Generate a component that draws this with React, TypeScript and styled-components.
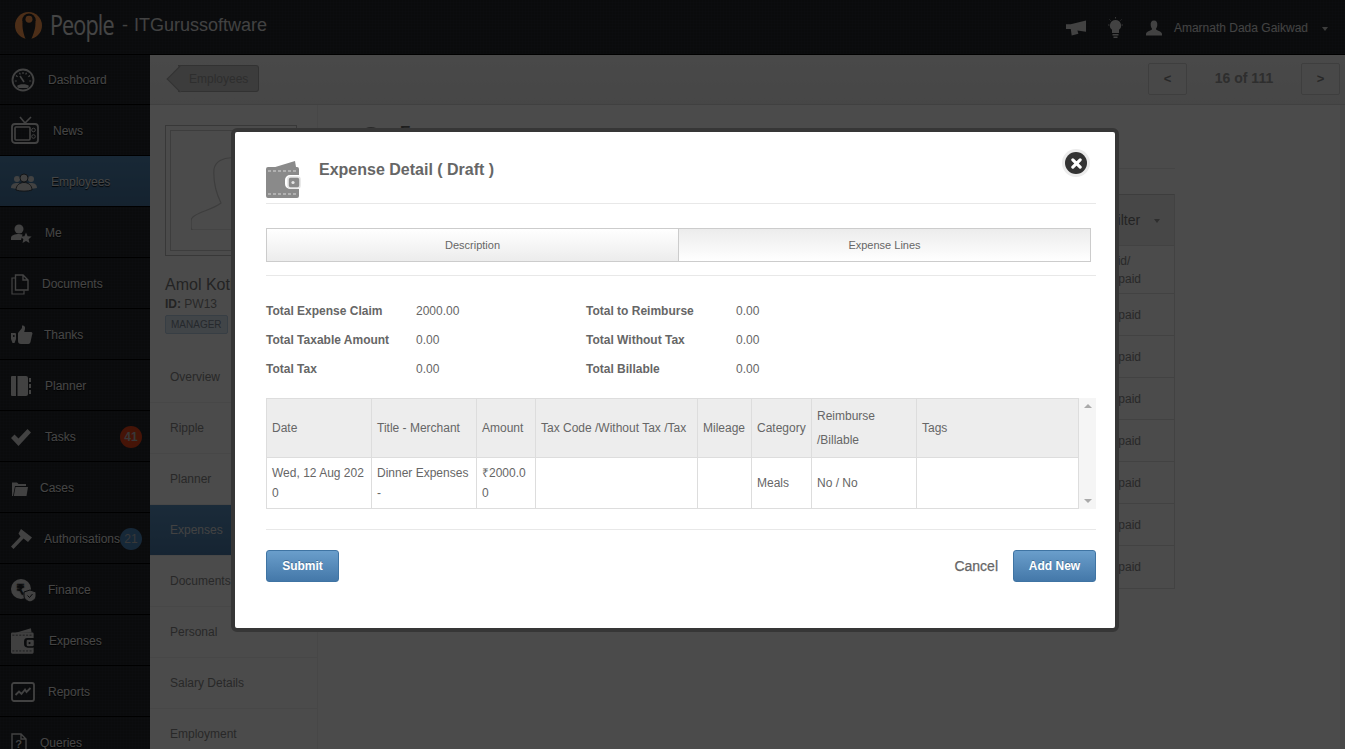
import React from "react";
import styled, { createGlobalStyle } from "styled-components";

const Global = createGlobalStyle`
  html, body { margin: 0; padding: 0; height: 100%; overflow: hidden; background: #fff; }
  body { font-family: "Liberation Sans", Arial, sans-serif; font-size: 12px; color: #666; }
  * { box-sizing: border-box; }
`;

const texture = `
  repeating-linear-gradient(0deg, rgba(255,255,255,.02) 0 1px, transparent 1px 3px),
  repeating-linear-gradient(90deg, rgba(255,255,255,.02) 0 1px, transparent 1px 3px)
`;

const Page = styled.div`
  width: 1345px; height: 749px; overflow: hidden;
  display: flex; flex-direction: column;
`;
const Header = styled.header`
  height: 55px; flex: none; display: flex; align-items: center;
  background: ${texture}, #22262b; border-bottom: 1px solid #000;
  color: #ddd; padding: 0 15px 4px 15px;
`;
const LogoMark = styled.svg`width: 27px; height: 27px; flex: none;`;
const Brand = styled.span`
  font-family: "Open Sans", sans-serif; font-size: 27px; color: #e6e6e6;
  margin-left: 8px; letter-spacing: -1.1px; line-height: 30px;
  display: inline-block; transform: scaleX(.8); transform-origin: left center; width: 64px;
`;
const Company = styled.span`
  font-size: 18px; color: #dcdcdc; margin-left: 8px; white-space: nowrap; word-spacing: 1px;
`;
const HeaderRight = styled.div`
  margin-left: auto; display: flex; align-items: center; color: #e0e0e0; font-size: 12px; padding-top: 5px;
`;
const HeadIcon = styled.svg<{ $gap: number }>`flex: none; margin-right: ${p => p.$gap}px;`;
const Caret = styled.span`
  width: 0; height: 0; border: 3.5px solid transparent; border-top: 4px solid ${p => p.color || "#ccc"};
  display: inline-block; margin-left: 14px; margin-top: 5px; margin-right: 2px;
`;

const Body = styled.div`flex: 1; display: flex; min-height: 0;`;
const Sidebar = styled.nav`
  width: 150px; flex: none; background: ${texture}, #22262b;
`;
const NavRow = styled.div<{ $active?: boolean }>`
  height: 51px; padding-top: 2px; display: flex; align-items: center; position: relative;
  border-bottom: 1px solid #000; color: #e8e8e8; font-size: 12px;
  text-shadow: 0 1px 1px #000;
  background: ${p => p.$active ? "linear-gradient(#5187b5, #46749e)" : "transparent"};
  &:first-child { height: 50px; padding-top: 0; }
`;
const NavSlot = styled.div<{ $w: number }>`
  width: ${p => p.$w}px; flex: none; display: flex; align-items: center; padding-left: 11px; height: 100%;
`;
const NavSvg = styled.svg`fill: #dcdcdc; color: #dcdcdc; flex: none; overflow: visible;`;
const Badge = styled.span<{ $c: string }>`
  position: absolute; left: 120px; top: 15px; width: 22px; height: 22px; border-radius: 50%;
  background: ${p => p.$c}; color: #bbb; font-size: 12px; font-weight: ${p => p.$c === "#e8431a" ? 700 : 400};
  display: flex; align-items: center; justify-content: center; text-shadow: none;
`;

const Main = styled.main`flex: 1; min-width: 0; display: flex; flex-direction: column; background: #fafafa;`;
const Toolbar = styled.div`
  height: 50px; flex: none; display: flex; align-items: center; padding: 0 5px 0 28px;
  background: linear-gradient(#f4f4f4, #ececec); border-bottom: 1px solid #d6d6d6;
`;
const BackWrap = styled.div`
  height: 27px; width: 81px; position: relative; margin-top: -2px;
  border: 1px solid #a8a8a8; border-left: none; border-radius: 0 3px 3px 0; background: #c8c8c8;
  display: flex; align-items: center; padding-left: 11px;
  color: #999; font-size: 12px;
  &::before {
    content: ""; position: absolute; left: -8px; top: 3px; width: 19px; height: 19px;
    background: #c8c8c8; border-left: 1px solid #a8a8a8; border-bottom: 1px solid #a8a8a8; transform: rotate(45deg) scale(.95);
  }
  & > span { position: relative; }
`;
const Pager = styled.div`margin-left: auto; display: flex; align-items: center; margin-top: -2px;`;
const PageBtn = styled.div`
  width: 39px; height: 32px; border: 1px solid #cfcfcf; border-radius: 2px; background: #f1f1f1;
  display: flex; align-items: center; justify-content: center; font-weight: 700; color: #888; font-size: 13px;
`;
const PageInfo = styled.div`width: 114px; text-align: center; font-size: 14px; font-weight: 700; color: #999; padding-bottom: 1px;`;

const Columns = styled.div`flex: 1; display: flex; min-height: 0;`;
const Left = styled.aside`width: 168px; flex: none; border-right: 1px solid #eee; background: #fbfbfb;`;
const ProfileBox = styled.div`padding: 20px 15px 0 15px; height: 247px;`;
const Avatar = styled.div`
  width: 132px; height: 131px; border: 1px solid #bbb; padding: 4px;
`;
const AvatarIn = styled.div`width: 100%; height: 100%; border: 1px solid #ccc; display: flex; justify-content: center; align-items: flex-end; overflow: hidden; padding-bottom: 20px;`;
const Name = styled.div`font-size: 16px; color: #777; margin-top: 20px; white-space: nowrap;`;
const IdLine = styled.div`font-size: 12px; color: #888; margin-top: 3px; & b { color: #777; }`;
const Tag = styled.span`
  display: inline-block; margin-top: 4px; height: 19px; line-height: 17px; padding: 0 5px; border: 1px solid #b8cfe4; border-radius: 2px;
  background: #dbe6f0; color: #7d8a96; font-size: 10px;
`;
const SubRow = styled.div<{ $active?: boolean }>`
  height: 51px; padding-left: 20px; display: flex; align-items: center;
  border-bottom: 1px solid #eee; font-size: 12px;
  color: ${p => p.$active ? "#ddd" : "#888"};
  background: ${p => p.$active ? "linear-gradient(#5a90c0, #4a7aa8)" : "transparent"};
`;
const ContentPane = styled.section`flex: 1; min-width: 0; padding: 18px 0 0 40px; display: flex; border-right: 5px solid #f1f1f1;`;
const ContentInner = styled.div`width: 817px; display: flex; flex-direction: column; flex: none;`;
const ContentTitle = styled.h2`
  margin: 0; font-size: 16px; font-weight: 700; color: #666; height: 46px; border-bottom: 1px solid #e8e8e8; line-height: 20px;
  display: flex; align-items: flex-start; gap: 16px;
`;
const TitleDot = styled.span`width: 26px; height: 26px; border-radius: 50%; background: #888; flex: none; margin-top: 4px;`;
const BgTable = styled.div`margin-top: 25px; margin-left: auto; width: 260px; border: 1px solid #ddd; border-top: 1px solid #ccc;`;
const BgHead = styled.div`height: 51px; background: #eee; border-bottom: 1px solid #ddd; display: flex; align-items: center; padding-left: 193px; color: #777; font-size: 14px; white-space: nowrap;`;
const BgCell = styled.div<{ $h: number }>`
  height: ${p => p.$h}px; border-bottom: 1px solid #ddd; display: flex; flex-direction: column; justify-content: center; align-items: flex-start;
  padding-left: 187px; color: #888; font-size: 12px; line-height: 18px;
  &:last-child { border-bottom: none; }
`;

const Overlay = styled.div`position: fixed; inset: 0; background: rgba(0,0,0,.7); z-index: 10;`;

const Modal = styled.div`
  position: fixed; left: 231px; top: 128px; width: 888px; height: 504px; z-index: 20;
  background: #fff; border: 4px solid #363636; border-radius: 6px;
  padding: 0 19px 0 31px; display: flex; flex-direction: column; color: #666;
`;
const ModalHead = styled.div`
  height: 72px; flex: none; display: flex; align-items: flex-start; border-bottom: 1px solid #e8e8e8; padding-top: 29px;
`;
const ModalTitle = styled.h3`
  margin: -1px 0 0 18px; font-size: 16px; line-height: 20px; font-weight: 700; color: #666;
`;
const Close = styled.button`
  position: absolute; left: 830px; top: 20px; width: 22px; height: 22px; padding: 0; border-radius: 50%;
  background: #333; border: 0; box-shadow: 0 0 0 3px #ececec;
  display: flex; align-items: center; justify-content: center;
`;
const Tabs = styled.div`
  margin-top: 24px; width: 825px; height: 34px; flex: none; display: flex; border: 1px solid #ccc;
`;
const Tab = styled.div<{ $on?: boolean }>`
  flex: 1; display: flex; align-items: center; justify-content: center; font-size: 11px; color: #666;
  background: ${p => p.$on ? "linear-gradient(#ececec, #fff)" : "linear-gradient(#fff, #ececec)"};
  & + & { border-left: 1px solid #ccc; }
`;
const Rule = styled.div<{ $top: number }>`height: 1px; flex: none; background: #e8e8e8; margin-top: ${p => p.$top}px;`;
const Summary = styled.div`
  margin-top: 20px; display: grid; grid-template-columns: 150px 170px 150px 1fr; grid-auto-rows: 29px; align-items: center;
  font-size: 12px; flex: none;
`;
const SumLabel = styled.div`font-weight: 700; color: #666;`;
const SumValue = styled.div`color: #666;`;

const TableWrap = styled.div`margin-top: 15px; display: flex; flex: none; height: 111px;`;
const Table = styled.table`
  border-collapse: collapse; table-layout: fixed; width: 813px; flex: none; height: 111px; font-size: 12px; color: #666;
  th, td { border: 1px solid #ddd; padding: 0 5px; font-weight: 400; text-align: left; word-break: break-all; vertical-align: middle; }
  th { background: #ededed; height: 59px; line-height: 24px; word-break: normal; }
  td { height: 51px; line-height: 20px; }
`;
const ScrollTrack = styled.div`
  flex: 1; background: #f5f5f5; display: flex; flex-direction: column; justify-content: space-between; align-items: center; padding: 6px 0 6px;
`;
const Arrow = styled.span<{ $down?: boolean }>`
  width: 0; height: 0; border-left: 4px solid transparent; border-right: 4px solid transparent;
  ${p => p.$down ? "border-top: 4px solid #aaa;" : "border-bottom: 4px solid #aaa;"}
`;
const Footer = styled.div`margin-top: 20px; display: flex; align-items: center; flex: none;`;
const PrimaryBtn = styled.button<{ $w: number }>`
  width: ${p => p.$w}px; height: 32px; padding: 0; border: 1px solid #3f74a3; border-radius: 3px;
  background: linear-gradient(#6a9ecb, #4478a9); color: #fff; font: 700 12px "Liberation Sans", Arial, sans-serif;
  text-shadow: 0 -1px 0 rgba(0,0,0,.25);
`;
const CancelLink = styled.span`
  margin-left: auto; margin-right: 15px; font-size: 14px; color: #666; -webkit-text-stroke: .25px #666;
`;

const Wallet = ({ w, h, body = "#8a8a8a", line = "#d8d8d8", clasp = "#e4e4e4" }: { w: number; h: number; body?: string; line?: string; clasp?: string }) => (
  <svg width={w} height={h} viewBox="0 0 35 37" style={{ flex: "none", display: "block" }}>
    <path d="M6 7 L29 0 L30 6 Z" fill={body} />
    <path d="M2 6 H31 a2 2 0 0 1 2 2 V14 H24 a5 5 0 0 0 -5 5 V23 a5 5 0 0 0 5 5 H33 V35 a2 2 0 0 1 -2 2 H2 a2 2 0 0 1 -2 -2 V8 a2 2 0 0 1 2 -2 Z" fill={body} />
    <path d="M2 10 H31 M2 33 H31" stroke={line} strokeWidth="1" strokeDasharray="3 2" fill="none" />
    <rect x="22" y="16" width="12" height="11" rx="2.5" fill={body} stroke={clasp} strokeWidth="1.6" />
    <circle cx="27" cy="21.5" r="1.6" fill={clasp} />
  </svg>
);

const icons: Record<string, React.ReactNode> = {
  dashboard: (
    <NavSvg width="24" height="24" viewBox="0 0 24 24">
      <circle cx="12" cy="12" r="10.5" fill="none" stroke="currentColor" strokeWidth="1.8" />
      <path d="M12 4 v2 M5 7.5 l1.6 1.2 M19 7.5 l-1.6 1.2 M3.8 13 h2 M18.2 13 h2 M8.5 4.8 l.8 1.6 M15.5 4.8 l-.8 1.6" stroke="currentColor" strokeWidth="1.2" />
      <path d="M9 8 L13 14" stroke="currentColor" strokeWidth="1.6" />
      <path d="M6 18 C8 15.5 16 15.5 18 18 L16.5 20 H7.5 Z" fill="currentColor" />
    </NavSvg>
  ),
  news: (
    <NavSvg width="28" height="28" viewBox="0 0 28 28">
      <path d="M9 0 L14 6 L20 0" fill="none" stroke="currentColor" strokeWidth="1.6" />
      <rect x="1" y="7" width="26" height="19" rx="3" fill="none" stroke="currentColor" strokeWidth="1.8" />
      <rect x="4" y="10" width="15" height="13" rx="1" fill="none" stroke="currentColor" strokeWidth="1.6" />
      <circle cx="22.5" cy="13" r="1.8" fill="none" stroke="currentColor" />
      <circle cx="22.5" cy="19.5" r="1.8" fill="none" stroke="currentColor" />
    </NavSvg>
  ),
  employees: (
    <NavSvg width="26" height="17" viewBox="0 0 26 17">
      <circle cx="6" cy="5" r="3" /><circle cx="20" cy="5" r="3" />
      <path d="M0 14 C0 10 3 9 6 9 C9 9 12 10 12 14 L6 15 Z M14 14 C14 10 17 9 20 9 C23 9 26 10 26 14 L20 15 Z" />
      <circle cx="13" cy="4" r="4" stroke="#23272c" strokeWidth=".8" />
      <path d="M5 16 C5 11 9 8.5 13 8.5 C17 8.5 21 11 21 16 C17 17.5 9 17.5 5 16 Z" stroke="#23272c" strokeWidth=".8" />
    </NavSvg>
  ),
  me: (
    <NavSvg width="21" height="19" viewBox="0 0 21 19">
      <circle cx="8" cy="5" r="4.5" />
      <path d="M0 16 V14 C0 11 4 10 8 10 C9.5 10 10.5 10.2 11.5 10.5 L10 16 Z" />
      <path d="M15 8.5 L16.6 12.2 L20.6 12.6 L17.6 15.2 L18.5 19 L15 17 L11.5 19 L12.4 15.2 L9.4 12.6 L13.4 12.2 Z" />
    </NavSvg>
  ),
  documents: (
    <NavSvg width="18" height="21" viewBox="0 0 18 21">
      <path d="M4.5 1 H12 L17 6 V16 H4.5 Z M12 1 V6 H17" fill="none" stroke="currentColor" strokeWidth="1.4" />
      <path d="M4 4 H1 V20 H13 V16.5" fill="none" stroke="currentColor" strokeWidth="1.2" />
    </NavSvg>
  ),
  thanks: (
    <NavSvg width="22" height="20" viewBox="0 0 22 20">
      <path d="M0 8 H4 a1 1 0 0 1 1 1 V14 L3.5 18 H1.5 L0 14 Z" />
      <circle cx="2.8" cy="11" r=".9" fill="#23272c" />
      <path d="M7 8 L11 3 V0.5 C13 0 14.5 1.5 14 4 L13.2 7 H20 C21.5 7 22 9 21 10 L19.5 17 C19 18.7 18 19 16 19 H10 C8 19 7 18 7 16 Z" />
    </NavSvg>
  ),
  planner: (
    <NavSvg width="20" height="20" viewBox="0 0 20 20">
      <path d="M1 0 H5 V20 H1 a1 1 0 0 1 -1 -1 V1 a1 1 0 0 1 1 -1 Z" />
      <path d="M6.5 0 H15 a2 2 0 0 1 2 2 V18 a2 2 0 0 1 -2 2 H6.5 Z" />
      <rect x="18" y="2" width="2" height="4" /><rect x="18" y="8" width="2" height="4" /><rect x="18" y="14" width="2" height="4" />
    </NavSvg>
  ),
  tasks: (
    <NavSvg width="20" height="17" viewBox="0 0 20 17">
      <path d="M0 9 L3.5 5.5 L7.5 9.5 L16.5 0 L20 3.5 L7.5 17 Z" />
    </NavSvg>
  ),
  cases: (
    <NavSvg width="17" height="15" viewBox="0 0 17 15">
      <path d="M1 15 V1.5 H6 L7.5 3 H15 V5 H4 L2 15 Z" /><path d="M4.5 6 H17 L15.5 15 H2.8 Z" />
    </NavSvg>
  ),
  auth: (
    <NavSvg width="21" height="20" viewBox="0 0 21 20">
      <path d="M10 0 L21 8.5 L17 13 L12.5 9.5 L2.5 20 L0 17.5 L9.5 7.5 L7.5 4.5 Z" />
    </NavSvg>
  ),
  finance: (
    <NavSvg width="25" height="23" viewBox="0 0 25 23">
      <circle cx="10" cy="10" r="10" />
      <text x="9.5" y="15" fontSize="14" textAnchor="middle" fill="#22262b" fontFamily="Liberation Sans, DejaVu Sans, sans-serif">₹</text>
      <path d="M19 11 L25 13 V17 C25 20 22 22 19 23 C16 22 13 20 13 17 V13 Z" stroke="#22262b" strokeWidth="1" />
      <path d="M16.5 16.5 L18.5 18.5 L21.5 15" fill="none" stroke="#22262b" strokeWidth="1" />
    </NavSvg>
  ),
  reports: (
    <NavSvg width="24" height="20" viewBox="0 0 24 20">
      <rect x="1" y="1" width="22" height="18" rx="2" fill="none" stroke="currentColor" strokeWidth="1.8" />
      <path d="M4.5 13 L8 9.5 L10.5 12 L14 7.5 L15.5 10 L19.5 6" fill="none" stroke="currentColor" strokeWidth="1.8" />
    </NavSvg>
  ),
  queries: (
    <NavSvg width="16" height="20" viewBox="0 0 16 20">
      <path d="M1 1 H10 L15 6 V20 H1 Z M10 1 V6 H15" fill="none" stroke="currentColor" strokeWidth="1.4" />
      <text x="7.5" y="15" fontSize="11" fontWeight="700" textAnchor="middle" fill="currentColor" fontFamily="Liberation Sans, sans-serif">?</text>
    </NavSvg>
  ),
};

const navItems: { key: string; label: string; w: number; active?: boolean; badge?: [string, string] }[] = [
  { key: "dashboard", label: "Dashboard", w: 48 },
  { key: "news", label: "News", w: 53 },
  { key: "employees", label: "Employees", w: 51, active: true },
  { key: "me", label: "Me", w: 45 },
  { key: "documents", label: "Documents", w: 42 },
  { key: "thanks", label: "Thanks", w: 44 },
  { key: "planner", label: "Planner", w: 45 },
  { key: "tasks", label: "Tasks", w: 45, badge: ["41", "#e8431a"] },
  { key: "cases", label: "Cases", w: 40 },
  { key: "auth", label: "Authorisations", w: 44, badge: ["21", "#4c86bc"] },
  { key: "finance", label: "Finance", w: 48 },
  { key: "wallet", label: "Expenses", w: 49 },
  { key: "reports", label: "Reports", w: 48 },
  { key: "queries", label: "Queries", w: 40 },
];

const subItems = ["Overview", "Ripple", "Planner", "Expenses", "Documents", "Personal", "Salary Details", "Employment"];

const summary = [
  ["Total Expense Claim", "2000.00", "Total to Reimburse", "0.00"],
  ["Total Taxable Amount", "0.00", "Total Without Tax", "0.00"],
  ["Total Tax", "0.00", "Total Billable", "0.00"],
];

const colWidths = [105, 105, 59, 162, 54, 60, 105, 162];

export default function App() {
  return (
    <>
      <Global />
      <Page>
        <Header>
          <LogoMark viewBox="0 0 28 28">
            <circle cx="14" cy="14" r="14" fill="#ff9c50" />
            <circle cx="14.5" cy="8.5" r="7" fill="#22262b" />
            <path d="M8 10 C7 16 9 23 11 28 H17 C19 23 22 16 21 10 Z" fill="#22262b" />
            <circle cx="14.5" cy="7.5" r="3.6" fill="#ff9c50" />
          </LogoMark>
          <Brand>People</Brand>
          <Company>- ITGurussoftware</Company>
          <HeaderRight>
            <HeadIcon $gap={22} width="20" height="16" viewBox="0 0 21 16" fill="#ddd">
              <path d="M0 4 H5 L21 0 V12 L12 10.5 L13 14 L6 16 L5 9 H0 Z" />
            </HeadIcon>
            <HeadIcon $gap={23} width="15" height="22" viewBox="0 0 15 22" fill="#ddd">
              <path d="M7.5 3 a5.5 5.5 0 0 1 3.5 9.8 V16 H4 V12.8 A5.5 5.5 0 0 1 7.5 3 Z" />
              <rect x="4.5" y="17" width="6" height="1.5" /><rect x="5.5" y="19.5" width="4" height="1.5" />
              <path d="M7.5 0 v1.5 M1.5 2.5 l1 1 M13.5 2.5 l-1 1 M0 8 h1.5 M13.5 8 h1.5" stroke="#ddd" strokeWidth=".8" />
            </HeadIcon>
            <HeadIcon $gap={12} width="16" height="16" viewBox="0 0 17 16" fill="#ddd">
              <path d="M8.5 0 C11 0 12.3 2 12 5 C11.8 7 11 8.2 10.5 9 C10.5 10.5 17 11 17 14.5 V16 H0 V14.5 C0 11 6.5 10.5 6.5 9 C6 8.2 5.2 7 5 5 C4.7 2 6 0 8.5 0 Z" />
            </HeadIcon>
            Amarnath Dada Gaikwad
            <Caret />
          </HeaderRight>
        </Header>
        <Body>
          <Sidebar>
            {navItems.map(it => (
              <NavRow key={it.key} $active={it.active}>
                <NavSlot $w={it.w}>
                  {it.key === "wallet" ? <Wallet w={24} h={26} body="#d8d8d8" line="#22262b" clasp="#22262b" /> : icons[it.key]}
                </NavSlot>
                {it.label}
                {it.badge && <Badge $c={it.badge[1]}>{it.badge[0]}</Badge>}
              </NavRow>
            ))}
          </Sidebar>
          <Main>
            <Toolbar>
              <BackWrap><span>Employees</span></BackWrap>
              <Pager>
                <PageBtn>&lt;</PageBtn>
                <PageInfo>16 of 111</PageInfo>
                <PageBtn>&gt;</PageBtn>
              </Pager>
            </Toolbar>
            <Columns>
              <Left>
                <ProfileBox>
                  <Avatar>
                    <AvatarIn>
                      <svg width="80" height="77" viewBox="0 0 80 77" fill="none" stroke="#ccc" strokeWidth="1.2">
                        <path d="M2 77 C0 77 0 75 0 73 V68 C0 60 20 58 30 50 C26 42 22 30 23 16 C26 1 54 1 57 16 C58 30 54 42 50 50 C60 58 80 60 80 68 V73 C80 75 80 77 78 77 Z" />
                      </svg>
                    </AvatarIn>
                  </Avatar>
                  <Name>Amol Kothari</Name>
                  <IdLine><b>ID:</b> PW13</IdLine>
                  <Tag>MANAGER</Tag>
                </ProfileBox>
                {subItems.map(s => <SubRow key={s} $active={s === "Expenses"}>{s}</SubRow>)}
              </Left>
              <ContentPane>
                <ContentInner>
                  <ContentTitle><TitleDot />Expenses</ContentTitle>
                  <BgTable>
                    <BgHead>Filter<Caret color="#999" /></BgHead>
                    <BgCell $h={48}><span>Paid/</span><span>Unpaid</span></BgCell>
                    {[0, 1, 2, 3, 4, 5, 6].map(i => <BgCell key={i} $h={42}>Unpaid</BgCell>)}
                  </BgTable>
                </ContentInner>
              </ContentPane>
            </Columns>
          </Main>
        </Body>
      </Page>
      <Overlay />
      <Modal>
        <ModalHead>
          <Wallet w={35} h={37} />
          <ModalTitle>Expense Detail ( Draft )</ModalTitle>
        </ModalHead>
        <Close aria-label="Close">
          <svg width="11" height="11" viewBox="0 0 12 12">
            <path d="M2 2 L10 10 M10 2 L2 10" stroke="#fff" strokeWidth="3.4" strokeLinecap="round" />
          </svg>
        </Close>
        <Tabs>
          <Tab>Description</Tab>
          <Tab $on>Expense Lines</Tab>
        </Tabs>
        <Rule $top={13} />
        <Summary>
          {summary.flat().map((t, i) => i % 2 === 0 ? <SumLabel key={i}>{t}</SumLabel> : <SumValue key={i}>{t}</SumValue>)}
        </Summary>
        <TableWrap>
          <Table>
            <colgroup>{colWidths.map((w, i) => <col key={i} style={{ width: w }} />)}</colgroup>
            <thead>
              <tr>
                <th>Date</th><th>Title - Merchant</th><th>Amount</th><th>Tax Code /Without Tax /Tax</th>
                <th>Mileage</th><th>Category</th><th>Reimburse /Billable</th><th>Tags</th>
              </tr>
            </thead>
            <tbody>
              <tr>
                <td>Wed, 12 Aug 2020</td><td>Dinner Expenses -</td><td>₹2000.00</td><td></td>
                <td></td><td>Meals</td><td>No / No</td><td></td>
              </tr>
            </tbody>
          </Table>
          <ScrollTrack><Arrow /><Arrow $down /></ScrollTrack>
        </TableWrap>
        <Rule $top={20} />
        <Footer>
          <PrimaryBtn $w={73}>Submit</PrimaryBtn>
          <CancelLink>Cancel</CancelLink>
          <PrimaryBtn $w={83}>Add New</PrimaryBtn>
        </Footer>
      </Modal>
    </>
  );
}
